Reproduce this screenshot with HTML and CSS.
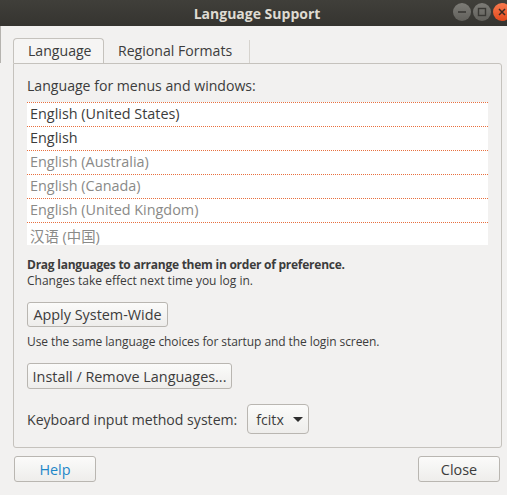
FILE: index.html
```html
<!DOCTYPE html>
<html lang="en">
<head>
    <meta charset="UTF-8">
    <title>Language Support</title>
    <link rel="stylesheet" href="styles.css">
</head>
<body>
    <div class="window">
        <header class="titlebar">
            <span class="title">Language Support</span>
            <div class="wm-buttons">
                <span class="wm-btn"><svg width="18" height="18" viewBox="0 0 18 18"><path d="M5 9h8" stroke="#3a3935" stroke-width="1.6"/></svg></span>
                <span class="wm-btn"><svg width="18" height="18" viewBox="0 0 18 18"><rect x="5.5" y="5.5" width="7" height="7" fill="none" stroke="#3a3935" stroke-width="1.4"/></svg></span>
                <span class="wm-btn close"><svg width="18" height="18" viewBox="0 0 18 18"><path d="M6 6l6 6M12 6l-6 6" stroke="#3a2a24" stroke-width="1.5"/></svg></span>
            </div>
        </header>

        <main class="content">
            <div class="tabs">
                <div class="tab active">Language</div>
                <div class="tab">Regional Formats</div>
            </div>

            <section class="panel">
                <p class="label">Language for menus and windows:</p>
                <div class="lang-list">
                    <div class="lang-row">English (United States)</div>
                    <div class="lang-row">English</div>
                    <div class="lang-row off">English (Australia)</div>
                    <div class="lang-row off">English (Canada)</div>
                    <div class="lang-row off">English (United Kingdom)</div>
                    <div class="lang-row off cjk">汉语 (中国)</div>
                </div>

                <p class="hint"><strong>Drag languages to arrange them in order of preference.</strong><br>Changes take effect next time you log in.</p>

                <button class="btn apply-btn">Apply System-Wide</button>
                <p class="hint note">Use the same language choices for startup and the login screen.</p>

                <button class="btn install-btn">Install / Remove Languages...</button>

                <div class="keyboard-row">
                    <span>Keyboard input method system:</span>
                    <div class="combo">fcitx <span class="arrow"></span></div>
                </div>
            </section>

            <footer class="actions">
                <button class="btn help-btn">Help</button>
                <button class="btn">Close</button>
            </footer>
        </main>
    </div>
</body>
</html>
```

FILE: styles.css
```css
body {
    margin: 0;
    width: 507px;
    height: 495px;
    overflow: hidden;
    background-color: #f2f1f0;
    font-family: 'Open Sans', 'Noto Sans CJK SC', sans-serif;
    font-size: 14.1px;
    color: #3c3c3c;
}

.window {
    height: 100%;
    position: relative;
}

/* strip of desktop showing at the left edge */
.window::before {
    content: '';
    position: absolute;
    left: 0;
    top: 26px;
    width: 1px;
    height: 37px;
    background-color: #b5b3af;
}

.titlebar {
    height: 26px;
    background: linear-gradient(#403f3a, #353430);
    display: flex;
    align-items: center;
    justify-content: center;
    padding-left: 7px;
    position: relative;
}

.title {
    color: #dfdbd2;
    font-weight: bold;
    font-size: 14px;
}

.wm-buttons {
    position: absolute;
    right: -4px;
    top: 3px;
    display: flex;
    gap: 2px;
}

.wm-btn {
    width: 18px;
    height: 18px;
    border-radius: 50%;
    background: linear-gradient(#7d7c77, #61605b);
    display: flex;
}

.wm-btn.close {
    background: linear-gradient(#f77a4e, #e2491d);
}

.content {
    padding: 12px 5px 0 13px;
}

.tabs {
    display: flex;
    height: 25px;
}

.tab {
    padding: 0 14px 0 14px;
    line-height: 25px;
    box-sizing: border-box;
}

.tab.active {
    width: 91px;
    border: 1px solid #c5c2bd;
    border-bottom: none;
    border-radius: 4px 4px 0 0;
    background-color: #f6f5f4;
    line-height: 24px;
}

.tab + .tab {
    width: 146px;
    margin-top: 2px;
    line-height: 21px;
    border-right: 1px solid #d6d3ce;
}

.panel {
    border: 1px solid #c5c2bd;
    border-radius: 0 3px 3px 3px;
    padding: 12px 13px 13px 13px;
    height: 385px;
    box-sizing: border-box;
}

.label {
    margin: 0 0 6px 0;
    line-height: 20px;
}

.lang-list {
    background-color: #ffffff;
    height: 143px;
    overflow: hidden;
}

.lang-row {
    height: 24px;
    line-height: 22px;
    border-top: 1px dotted #e8703f;
    padding-left: 3px;
    box-sizing: border-box;
    font-size: 14.4px;
}

.lang-row.off {
    color: #8a8a88;
}

.lang-row.cjk {
    padding-top: 3px;
}

.hint {
    font-size: 12px;
    line-height: 16px;
    margin: 12px 0 0 0;
}

.hint strong {
    letter-spacing: -0.25px;
}

.note {
    margin-top: 7px;
    letter-spacing: -0.08px;
}

.btn {
    font-family: inherit;
    font-size: 14.4px;
    color: #3c3c3c;
    background: linear-gradient(#fbfbfa, #eeedeb);
    border: 1px solid #b9b6b1;
    border-radius: 3px;
    padding: 0 4px;
    height: 25px;
    display: block;
    white-space: nowrap;
}

.apply-btn {
    margin-top: 13px;
    width: 141px;
}

.install-btn {
    margin-top: 13px;
    width: 205px;
    height: 26px;
}

.keyboard-row {
    display: flex;
    align-items: center;
    gap: 10px;
    margin-top: 15px;
    white-space: nowrap;
}

.combo {
    width: 62px;
    height: 30px;
    box-sizing: border-box;
    border: 1px solid #b9b6b1;
    border-radius: 4px;
    background: linear-gradient(#fbfbfa, #eeedeb);
    display: flex;
    align-items: center;
    padding-left: 8px;
    gap: 9px;
}

.arrow {
    width: 0;
    height: 0;
    border-left: 5px solid transparent;
    border-right: 5px solid transparent;
    border-top: 5px solid #2e2e2e;
}

.actions {
    display: flex;
    justify-content: space-between;
    margin-top: 8px;
    padding-left: 1px;
    padding-right: 2px;
}

.actions .btn {
    width: 82px;
    height: 26px;
}

.help-btn {
    color: #1e87c8;
}
```
